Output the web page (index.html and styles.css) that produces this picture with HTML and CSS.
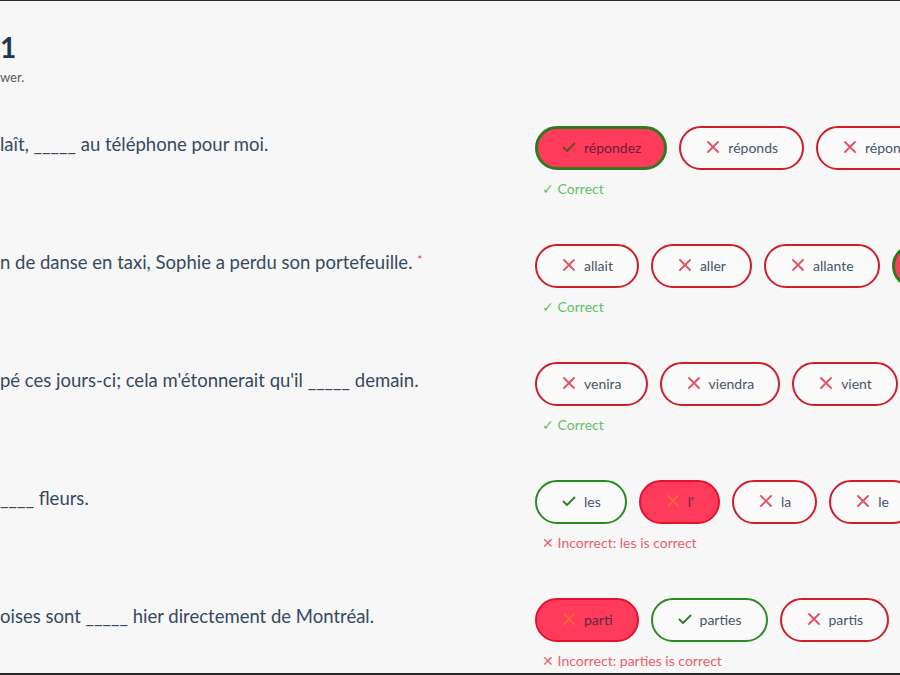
FILE: index.html
```html
<!DOCTYPE html>
<html lang="fr">
<head>
<meta charset="utf-8">
<title>Quiz</title>
<link rel="stylesheet" href="styles.css">
</head>
<body>
<main class="page">
  <header class="header">
    <h1 class="title">1</h1>
    <p class="subtitle">wer.</p>
  </header>

  <section class="question">
    <p class="prompt">laît, _____ au téléphone pour moi.</p>
    <div class="answer">
      <div class="pills">
        <span class="pill sel-correct"><svg class="ico" viewBox="0 0 14 14"><polyline points="1.5,7.5 5,11 12.5,3.5"/></svg>répondez</span>
        <span class="pill wrong"><svg class="ico" viewBox="0 0 14 14"><path d="M2 2L12 12M12 2L2 12"/></svg>réponds</span>
        <span class="pill wrong"><svg class="ico" viewBox="0 0 14 14"><path d="M2 2L12 12M12 2L2 12"/></svg>répondre</span>
      </div>
      <p class="feedback ok">✓ Correct</p>
    </div>
  </section>

  <section class="question">
    <p class="prompt">n de danse en taxi, Sophie a perdu son portefeuille. <span class="req">*</span></p>
    <div class="answer">
      <div class="pills">
        <span class="pill wrong"><svg class="ico" viewBox="0 0 14 14"><path d="M2 2L12 12M12 2L2 12"/></svg>allait</span>
        <span class="pill wrong"><svg class="ico" viewBox="0 0 14 14"><path d="M2 2L12 12M12 2L2 12"/></svg>aller</span>
        <span class="pill wrong"><svg class="ico" viewBox="0 0 14 14"><path d="M2 2L12 12M12 2L2 12"/></svg>allante</span>
        <span class="pill sel-correct"><svg class="ico" viewBox="0 0 14 14"><polyline points="1.5,7.5 5,11 12.5,3.5"/></svg>allant</span>
      </div>
      <p class="feedback ok">✓ Correct</p>
    </div>
  </section>

  <section class="question">
    <p class="prompt">pé ces jours-ci; cela m'étonnerait qu'il _____ demain.</p>
    <div class="answer">
      <div class="pills">
        <span class="pill wrong"><svg class="ico" viewBox="0 0 14 14"><path d="M2 2L12 12M12 2L2 12"/></svg>venira</span>
        <span class="pill wrong"><svg class="ico" viewBox="0 0 14 14"><path d="M2 2L12 12M12 2L2 12"/></svg>viendra</span>
        <span class="pill wrong"><svg class="ico" viewBox="0 0 14 14"><path d="M2 2L12 12M12 2L2 12"/></svg>vient</span>
      </div>
      <p class="feedback ok">✓ Correct</p>
    </div>
  </section>

  <section class="question">
    <p class="prompt">____ fleurs.</p>
    <div class="answer">
      <div class="pills">
        <span class="pill correct"><svg class="ico" viewBox="0 0 14 14"><polyline points="1.5,7.5 5,11 12.5,3.5"/></svg>les</span>
        <span class="pill sel-wrong"><svg class="ico" viewBox="0 0 14 14"><path d="M2 2L12 12M12 2L2 12"/></svg>l'</span>
        <span class="pill wrong"><svg class="ico" viewBox="0 0 14 14"><path d="M2 2L12 12M12 2L2 12"/></svg>la</span>
        <span class="pill wrong"><svg class="ico" viewBox="0 0 14 14"><path d="M2 2L12 12M12 2L2 12"/></svg>le</span>
      </div>
      <p class="feedback bad">✕ Incorrect: les is correct</p>
    </div>
  </section>

  <section class="question last">
    <p class="prompt">oises sont _____ hier directement de Montréal.</p>
    <div class="answer">
      <div class="pills">
        <span class="pill sel-wrong"><svg class="ico" viewBox="0 0 14 14"><path d="M2 2L12 12M12 2L2 12"/></svg>parti</span>
        <span class="pill correct"><svg class="ico" viewBox="0 0 14 14"><polyline points="1.5,7.5 5,11 12.5,3.5"/></svg>parties</span>
        <span class="pill wrong"><svg class="ico" viewBox="0 0 14 14"><path d="M2 2L12 12M12 2L2 12"/></svg>partis</span>
      </div>
      <p class="feedback bad">✕ Incorrect: parties is correct</p>
    </div>
  </section>
</main>
</body>
</html>
```

FILE: styles.css
```css
* { box-sizing: border-box; }

html, body {
  margin: 0;
  padding: 0;
}

body {
  width: 900px;
  height: 675px;
  overflow: hidden;
  background: #f7f7f7;
  border-top: 1px solid #2a2a2a;
  border-bottom: 2px solid #2a2a2a;
  font-family: Lato, "Open Sans", sans-serif;
  color: #34495e;
}

.page {
  display: flex;
  flex-direction: column;
}

.header {
  padding-top: 29px;
  height: 125px;
}

.title {
  margin: 0;
  font-size: 28px;
  line-height: 34px;
  font-weight: 700;
  color: #1c3654;
}

.subtitle {
  margin: 5px 0 0;
  font-size: 13px;
  line-height: 16px;
  color: #55606b;
}

.question {
  display: grid;
  grid-template-columns: 535px 1fr;
  height: 118px;
}

.question.last {
  height: auto;
}

.prompt {
  margin: 0;
  padding-top: 6px;
  font-size: 18.5px;
  line-height: 24px;
  color: #36495f;
  white-space: nowrap;
}

.req {
  color: #e23b4b;
  font-size: 12px;
  vertical-align: top;
  position: relative;
  top: -2px;
}

.answer {
  display: flex;
  flex-direction: column;
}

.pills {
  display: flex;
  gap: 12px;
  flex-wrap: nowrap;
}

.pill {
  flex: none;
  display: inline-flex;
  align-items: center;
  gap: 8px;
  height: 44px;
  padding: 0 24px 2px 25px;
  border-radius: 22px;
  border: 2px solid #cf1d2a;
  background: #fafafa;
  font-size: 14px;
  color: #45556a;
  white-space: nowrap;
}

.ico {
  width: 14px;
  height: 14px;
  fill: none;
  stroke-width: 1.8;
  stroke-linecap: round;
  stroke-linejoin: round;
}

.wrong .ico { stroke: #e35260; }

.correct {
  border-color: #2b8a21;
}
.correct .ico { stroke: #2f7d25; }

.sel-wrong {
  background: #ff3b5c;
  border-color: #e4122e;
  color: #5b2c45;
}
.sel-wrong .ico { stroke: #ff6147; }

.sel-correct {
  background: #ff3b5c;
  border: 3px solid #2f7a1f;
  padding: 0 23px 2px 24px;
  color: #6b1d3b;
}
.sel-correct .ico { stroke: #6d4a22; }

.feedback {
  margin: 10px 0 0 7px;
  font-size: 14px;
  line-height: 18px;
}

.ok { color: #66bf66; }
.bad { color: #e8606e; }
```
